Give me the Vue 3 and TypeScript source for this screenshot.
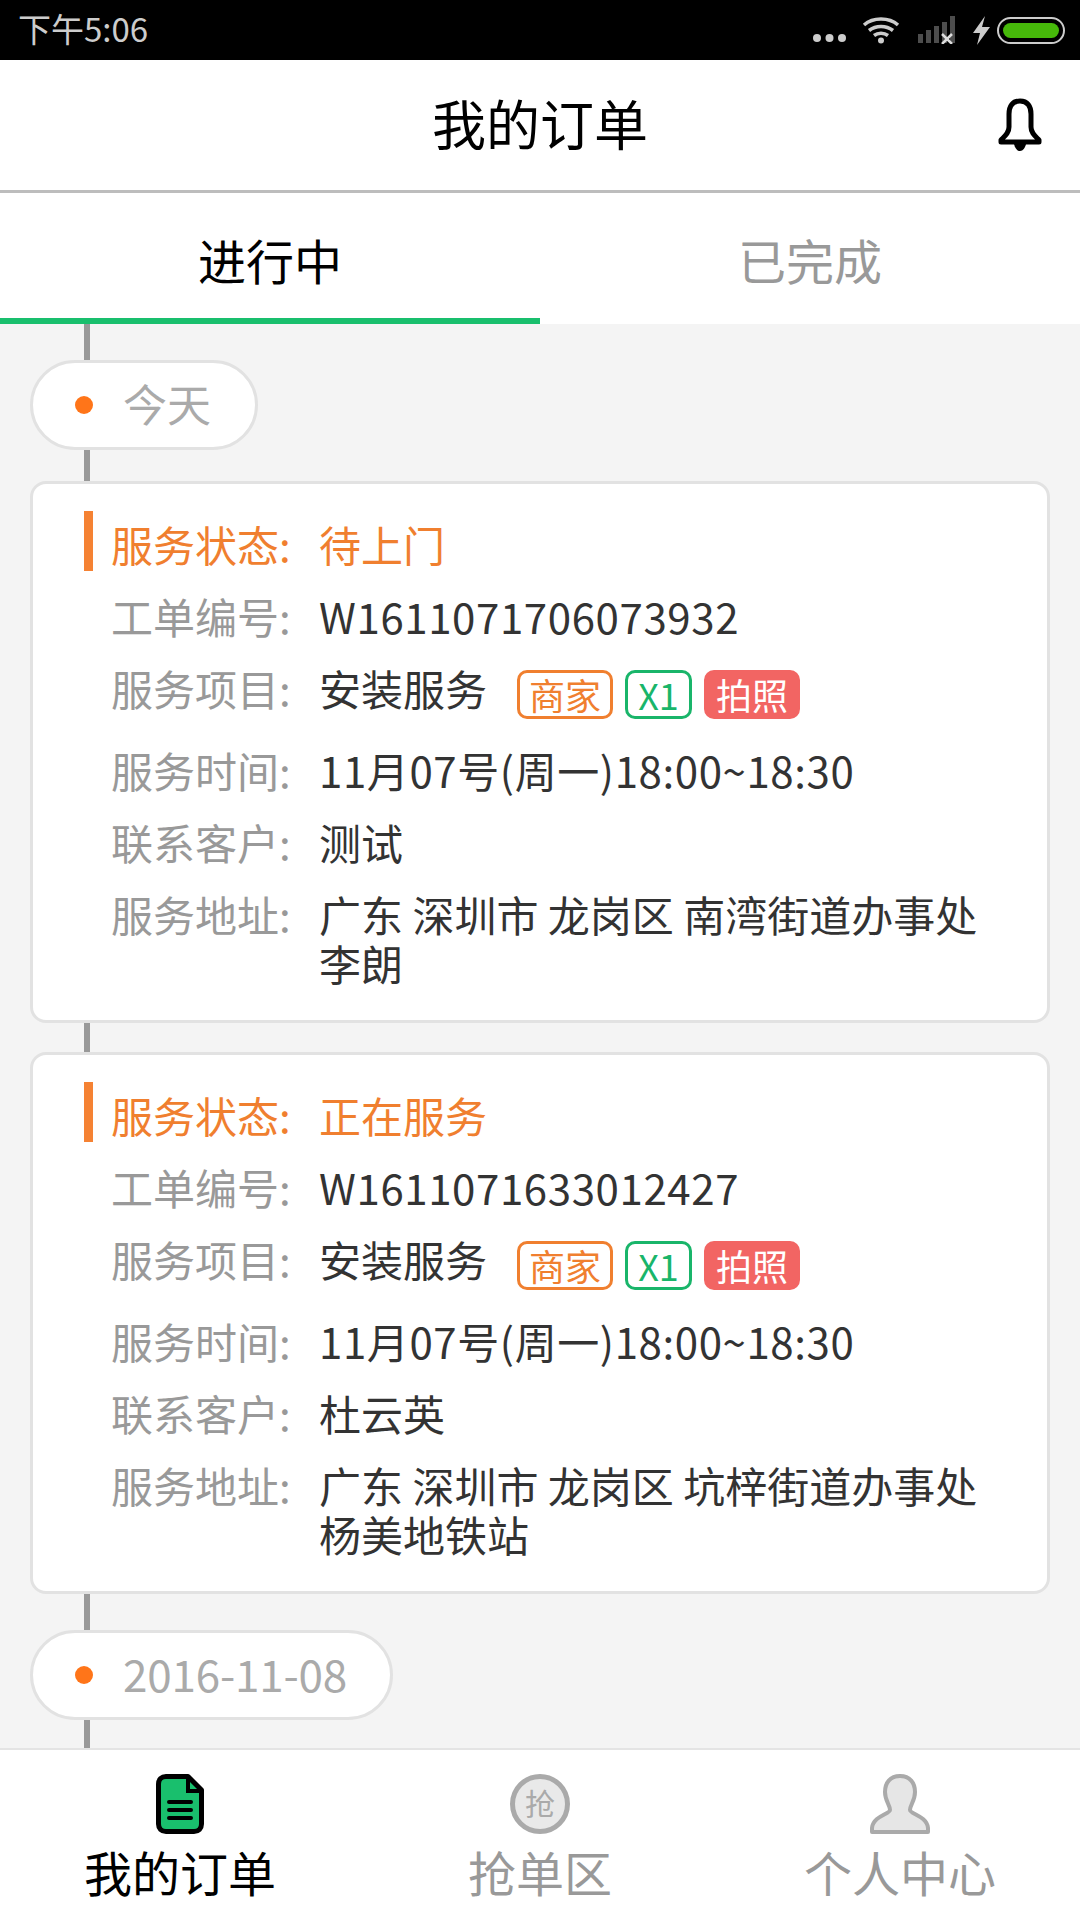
<script setup lang="ts">
type Tag = { text: string; kind: "seller" | "count" | "photo" };
type Order = {
  status: string;
  code: string;
  service: string;
  time: string;
  customer: string;
  address: string[];
};

const tags: Tag[] = [
  { text: "商家", kind: "seller" },
  { text: "X1", kind: "count" },
  { text: "拍照", kind: "photo" },
];

const orders: Order[] = [
  {
    status: "待上门",
    code: "W1611071706073932",
    service: "安装服务",
    time: "11月07号(周一)18:00~18:30",
    customer: "测试",
    address: ["广东 深圳市 龙岗区 南湾街道办事处", "李朗"],
  },
  {
    status: "正在服务",
    code: "W1611071633012427",
    service: "安装服务",
    time: "11月07号(周一)18:00~18:30",
    customer: "杜云英",
    address: ["广东 深圳市 龙岗区 坑梓街道办事处", "杨美地铁站"],
  },
];
</script>

<template>
  <div class="page">
    <div class="statusBar">
      <span class="clock">下午5:06</span>
      <div class="statusIcons">
        <svg class="dots" width="33" height="10" viewBox="0 0 33 10">
          <circle cx="4" cy="5" r="4" fill="#ccc" />
          <circle cx="16.500" cy="5" r="4" fill="#ccc" />
          <circle cx="29" cy="5" r="4" fill="#ccc" />
        </svg>
        <svg class="wifi" width="38" height="28" viewBox="0 0 38 28" fill="none" stroke="#ccc" stroke-width="3.500">
          <path d="M2 9C11 1 27 1 36 9" />
          <path d="M7 14.500C14 9 24 9 31 14.500" />
          <path d="M12 19.500C16 16.500 22 16.500 26 19.500" />
          <circle cx="19" cy="24.500" r="3" fill="#ccc" stroke="none" />
        </svg>
        <svg class="signal" width="38" height="28" viewBox="0 0 38 28">
          <rect x="0" y="18" width="5" height="9" fill="#4d4d4d" />
          <rect x="8" y="14" width="5" height="13" fill="#4d4d4d" />
          <rect x="16" y="10" width="5" height="17" fill="#4d4d4d" />
          <rect x="24" y="6" width="5" height="21" fill="#4d4d4d" />
          <rect x="32" y="0" width="5" height="27" fill="#4d4d4d" />
          <path d="M24 18L34 28M34 18L24 28" stroke="#ddd" stroke-width="2.500" />
        </svg>
        <svg class="bolt" width="17" height="29" viewBox="0 0 17 29">
          <path d="M12 0L0 17H7L4 29L17 11H9Z" fill="#ccc" />
        </svg>
        <div class="battery"><div class="batteryFill"></div></div>
      </div>
    </div>

    <header class="header">
      <h1 class="title">我的订单</h1>
      <svg class="bell" width="46" height="56" viewBox="0 0 46 56" fill="none">
        <path
          d="M23 5C15.500 5 12 10 12 18V31C12 37 8 40 4 44V46H42V44C38 40 34 37 34 31V18C34 10 30.500 5 23 5Z"
          stroke="#000"
          stroke-width="5"
          stroke-linejoin="round"
        />
        <path d="M17 48H29C28 52 26 55 23 55C20 55 18 52 17 48Z" fill="#000" />
      </svg>
    </header>

    <nav class="tabs">
      <div class="tab active">进行中</div>
      <div class="tab">已完成</div>
    </nav>

    <main class="timeline">
      <div class="line"></div>

      <div class="datePill">
        <span class="dot"></span>
        <span class="dateText">今天</span>
      </div>

      <article v-for="order in orders" :key="order.code" class="card">
        <div class="row statusRow">
          <span class="label">服务状态:</span>
          <span class="value">{{ order.status }}</span>
        </div>
        <div class="row">
          <span class="label">工单编号:</span>
          <span class="value spaced">{{ order.code }}</span>
        </div>
        <div class="row serviceRow">
          <span class="label">服务项目:</span>
          <span class="value">{{ order.service }}</span>
          <div class="tags">
            <span v-for="tag in tags" :key="tag.text" class="tag" :class="tag.kind">{{ tag.text }}</span>
          </div>
        </div>
        <div class="row">
          <span class="label">服务时间:</span>
          <span class="value spaced">{{ order.time }}</span>
        </div>
        <div class="row">
          <span class="label">联系客户:</span>
          <span class="value">{{ order.customer }}</span>
        </div>
        <div class="row">
          <span class="label">服务地址:</span>
          <span class="value">
            <span v-for="part in order.address" :key="part" class="addressLine">{{ part }}</span>
          </span>
        </div>
      </article>

      <div class="datePill second">
        <span class="dot"></span>
        <span class="dateText">2016-11-08</span>
      </div>
    </main>

    <footer class="bottomNav">
      <div class="navItem active">
        <svg width="48" height="60" viewBox="0 0 48 60">
          <path
            d="M10 2.500H32L45.500 16V50C45.500 54.500 42.500 57.500 38 57.500H10C5.500 57.500 2.500 54.500 2.500 50V10C2.500 5.500 5.500 2.500 10 2.500Z"
            fill="#19bf6d"
            stroke="#000"
            stroke-width="5"
            stroke-linejoin="round"
          />
          <path d="M32 3V17H45" fill="none" stroke="#000" stroke-width="4" />
          <path d="M13 28H35M13 36H35M13 44H35" stroke="#000" stroke-width="4" stroke-linecap="round" />
        </svg>
        <span class="navLabel">我的订单</span>
      </div>
      <div class="navItem">
        <div class="grabIcon">抢</div>
        <span class="navLabel">抢单区</span>
      </div>
      <div class="navItem">
        <svg width="60" height="60" viewBox="0 0 60 60">
          <path
            d="M30 2C20 2 15 9 15 18C15 27 20 31 20 36C20 40 3 42 2 54V58H58V54C57 42 40 40 40 36C40 31 45 27 45 18C45 9 40 2 30 2Z"
            fill="#e6e6e6"
            stroke="#aaa"
            stroke-width="4"
            stroke-linejoin="round"
          />
        </svg>
        <span class="navLabel">个人中心</span>
      </div>
    </footer>
  </div>
</template>

<style>
html,
body {
  margin: 0;
  background: #fff;
}
</style>

<style scoped>
.page {
  display: flex;
  flex-direction: column;
  width: 1080px;
  height: 1920px;
  overflow: hidden;
  font-family: "Noto Sans CJK SC", "Noto Sans", sans-serif;
  background: #fff;
}

.statusBar {
  display: flex;
  flex: none;
  align-items: center;
  justify-content: space-between;
  height: 60px;
  padding: 0 15px 0 18px;
  background: #000;
  box-sizing: border-box;
}

.clock {
  margin-top: -4px;
  font-size: 33px;
  line-height: 56px;
  color: #ccc;
}

.statusIcons {
  display: flex;
  align-items: center;
}

.dots {
  margin-top: 16px;
  margin-right: 16px;
}

.signal {
  margin-left: 18px;
}

.bolt {
  margin-left: 17px;
}

.battery {
  width: 68px;
  height: 27px;
  padding: 4px;
  margin-left: 7px;
  background: #000;
  border: 2px solid #ccc;
  border-radius: 14px;
  box-sizing: border-box;
}

.batteryFill {
  height: 100%;
  background: #46b90a;
  border-radius: 9px;
}

.header {
  position: relative;
  display: flex;
  flex: none;
  align-items: center;
  justify-content: center;
  height: 133px;
  padding-bottom: 5px;
  border-bottom: 3px solid #bdbdbd;
  box-sizing: border-box;
}

.title {
  margin: 0;
  font-size: 54px;
  font-weight: 400;
  color: #000;
}

.bell {
  position: absolute;
  top: 36px;
  right: 37px;
}

.tabs {
  display: flex;
  flex: none;
  height: 131px;
}

.tab {
  flex: 1;
  padding-top: 34px;
  font-size: 48px;
  line-height: 64px;
  color: #999;
  text-align: center;
  box-sizing: border-box;
}

.tab.active {
  color: #000;
  border-bottom: 6px solid #19bf6d;
}

.timeline {
  position: relative;
  flex: 1;
  min-height: 0;
  padding: 36px 30px 0;
  overflow: hidden;
  background: #f4f4f4;
}

.line {
  position: absolute;
  top: 0;
  bottom: 0;
  left: 84px;
  width: 6px;
  background: #999;
}

.datePill {
  position: relative;
  display: flex;
  align-items: center;
  width: fit-content;
  height: 90px;
  padding: 0 44px 0 42px;
  background: #fff;
  border: 3px solid #e2e2e2;
  border-radius: 45px;
  box-sizing: border-box;
}

.datePill.second {
  margin-top: 36px;
}

.dot {
  width: 18px;
  height: 18px;
  margin-right: 30px;
  background: #ff7519;
  border-radius: 50%;
}

.dateText {
  margin-top: -4px;
  font-size: 44px;
  line-height: 60px;
  color: #aaa;
}

.second .dateText {
  margin-right: -1px;
  letter-spacing: -0.2px;
}

.card {
  position: relative;
  padding: 36px 0 33px 78px;
  margin-top: 31px;
  background: #fff;
  border: 3px solid #e2e2e2;
  border-radius: 16px;
  box-sizing: border-box;
}

.card + .card {
  margin-top: 29px;
}

.row {
  display: flex;
  font-size: 42px;
  line-height: 48px;
}

.row + .row {
  margin-top: 24px;
}

.serviceRow {
  height: 58px;
}

.label {
  flex: none;
  width: 208px;
  color: #999;
}

.value {
  color: #333;
}

.value.spaced {
  letter-spacing: 0.6px;
}

.addressLine {
  display: block;
  line-height: 48.500px;
}

.statusRow .label,
.statusRow .value {
  color: #f07f2f;
}

.statusRow::before {
  position: absolute;
  top: 27px;
  left: 51px;
  width: 9px;
  height: 60px;
  content: "";
  background: #f58233;
}

.tags {
  display: flex;
  gap: 12px;
  margin-top: 6px;
  margin-left: 30px;
}

.tag {
  height: 49px;
  padding: 0 9px;
  font-size: 36px;
  line-height: 42px;
  text-align: center;
  border: 3px solid;
  border-radius: 10px;
  box-sizing: border-box;
}

.tag.seller {
  color: #f07f2f;
}

.tag.count {
  min-width: 67px;
  color: #19b56a;
}

.tag.photo {
  color: #fff;
  background: #f26563;
  border-color: #f26563;
}

.bottomNav {
  display: flex;
  flex: none;
  height: 172px;
  padding-top: 24px;
  background: #fff;
  border-top: 2px solid #e4e4e4;
  box-sizing: border-box;
}

.navItem {
  display: flex;
  flex: 1;
  flex-direction: column;
  align-items: center;
}

.navLabel {
  margin-top: 5px;
  font-size: 48px;
  line-height: 64px;
  color: #999;
}

.navItem.active .navLabel {
  color: #000;
}

.grabIcon {
  width: 60px;
  height: 60px;
  font-size: 30px;
  line-height: 46px;
  color: #aaa;
  text-align: center;
  background: #e9e9e9;
  border: 5px solid #aaa;
  border-radius: 50%;
  box-sizing: border-box;
}
</style>
